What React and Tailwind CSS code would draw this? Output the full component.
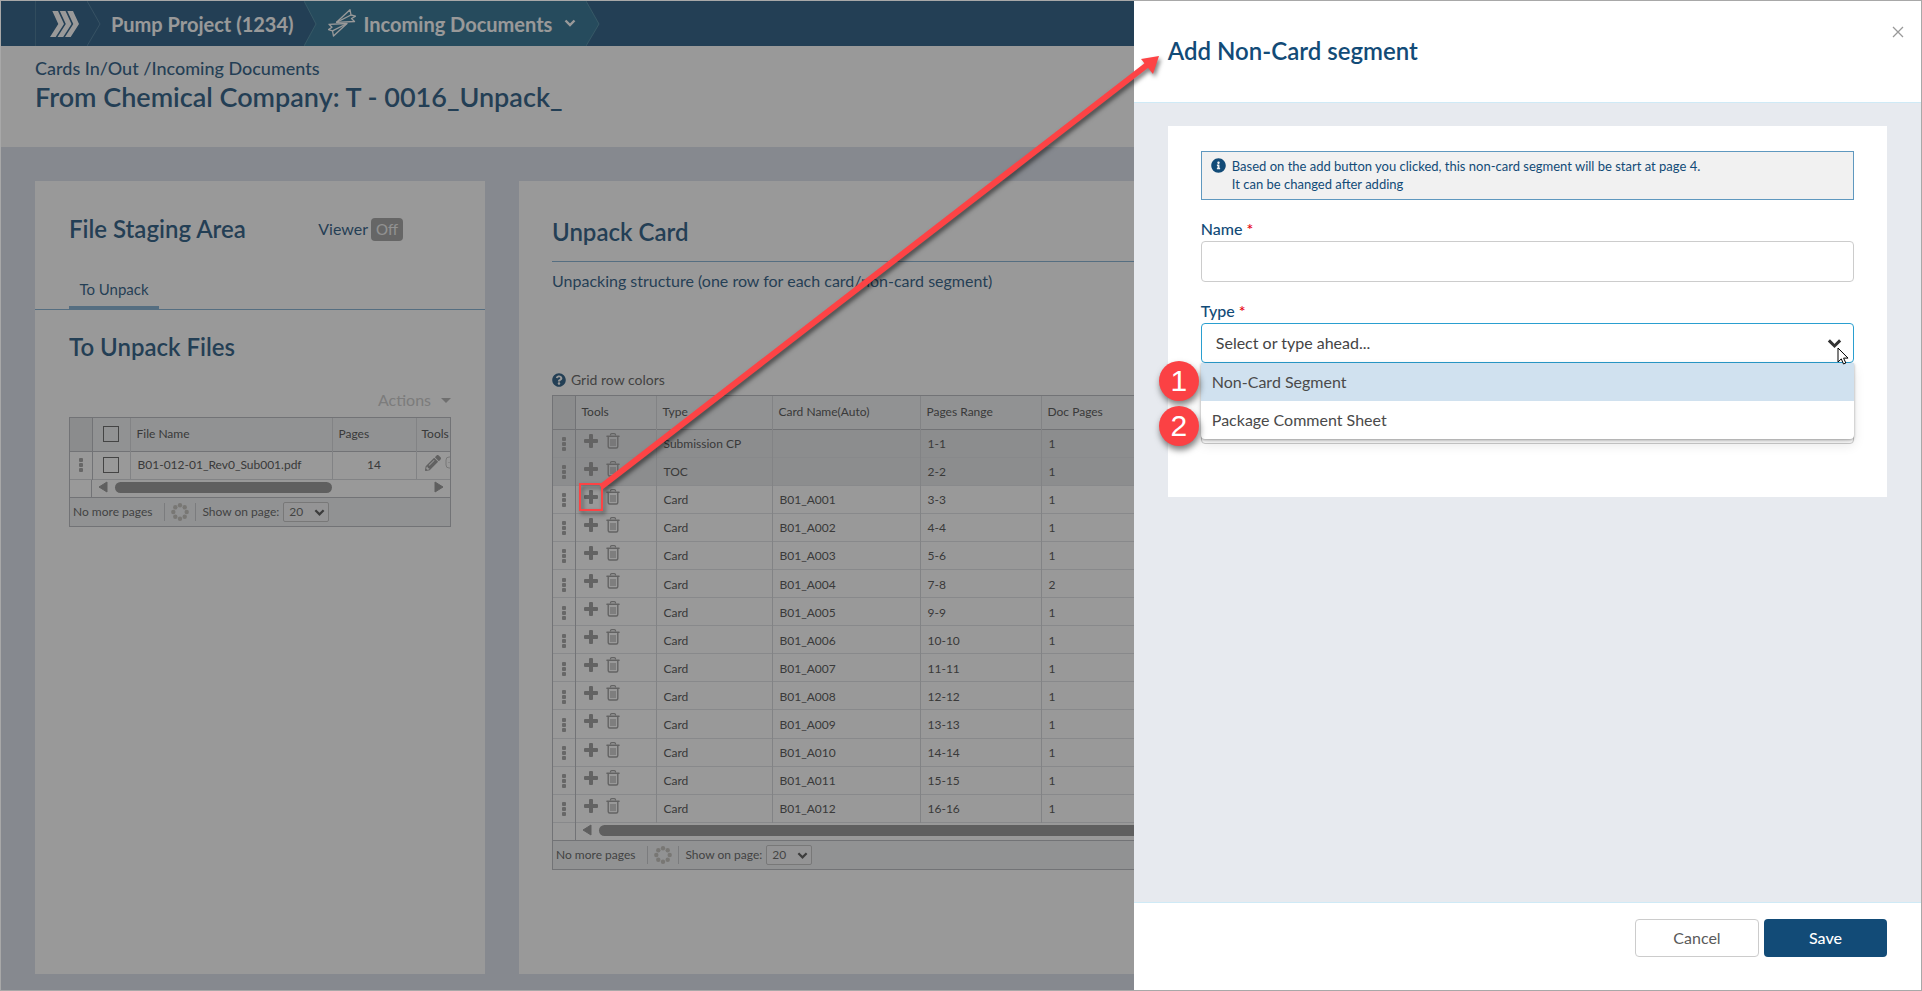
import React from "react";
import { FaPencilAlt, FaQuestionCircle, FaInfoCircle } from "react-icons/fa";

const gridRows = [
  { type: "Submission CP", name: "", range: "1-1", pages: 1, locked: true },
  { type: "TOC", name: "", range: "2-2", pages: 1, locked: true },
  { type: "Card", name: "B01_A001", range: "3-3", pages: 1 },
  { type: "Card", name: "B01_A002", range: "4-4", pages: 1 },
  { type: "Card", name: "B01_A003", range: "5-6", pages: 1 },
  { type: "Card", name: "B01_A004", range: "7-8", pages: 2 },
  { type: "Card", name: "B01_A005", range: "9-9", pages: 1 },
  { type: "Card", name: "B01_A006", range: "10-10", pages: 1 },
  { type: "Card", name: "B01_A007", range: "11-11", pages: 1 },
  { type: "Card", name: "B01_A008", range: "12-12", pages: 1 },
  { type: "Card", name: "B01_A009", range: "13-13", pages: 1 },
  { type: "Card", name: "B01_A010", range: "14-14", pages: 1 },
  { type: "Card", name: "B01_A011", range: "15-15", pages: 1 },
  { type: "Card", name: "B01_A012", range: "16-16", pages: 1 },
];

const Grip = () => (
  <svg className="mx-auto" width="4" height="14" viewBox="0 0 4 14" fill="#9a9a9a">
    <rect width="4" height="4" rx="1" />
    <rect y="5" width="4" height="4" rx="1" />
    <rect y="10" width="4" height="4" rx="1" />
  </svg>
);

const Plus = () => (
  <svg width="14" height="14" viewBox="0 0 14 14" fill="currentColor">
    <rect x="5" width="4" height="14" rx="1" />
    <rect y="5" width="14" height="4" rx="1" />
  </svg>
);

const Trash = () => (
  <svg width="14" height="16" viewBox="0 0 14 16" fill="none" stroke="currentColor">
    <path d="M4.500 2.500V1.800c0-.8.4-1.200 1.200-1.200h2.600c.8 0 1.200.4 1.200 1.200v.7" strokeWidth="1.200" />
    <path d="M1 3.200h12" strokeWidth="1.600" strokeLinecap="round" />
    <path d="M2.200 4v9.500c0 1 .6 1.500 1.500 1.500h6.600c.9 0 1.500-.5 1.500-1.500V4" strokeWidth="1.400" />
    <path d="M5 6v7M7 6v7M9 6v7" />
  </svg>
);

const Caret = ({ className, size = 12 }) => (
  <svg className={className} width={size} height={size} viewBox="0 0 12 12" fill="none" stroke="currentColor" strokeWidth="2.400">
    <path d="M1.500 3.500 6 8l4.500-4.500" />
  </svg>
);

const Spinner = () => (
  <svg width="18" height="18" viewBox="0 0 18 18" fill="#bdbab4">
    <circle cx="9" cy="2.300" r="2.200" />
    <circle cx="13.700" cy="4.300" r="2.200" />
    <circle cx="15.700" cy="9" r="2.200" />
    <circle cx="13.700" cy="13.700" r="2.200" />
    <circle cx="9" cy="15.700" r="2.200" />
    <circle cx="4.300" cy="13.700" r="2.200" />
    <circle cx="2.300" cy="9" r="2.200" />
    <circle cx="4.300" cy="4.300" r="2.200" />
  </svg>
);

const Arrow = ({ flip }) => (
  <svg className="shrink-0" width="10" height="12" viewBox="0 0 10 12" fill="#8b8b8b">
    {flip ? <path d="M1 1v10l8-5z" stroke="#8b8b8b" strokeLinejoin="round" /> : <path d="M9 1v10L1 6z" stroke="#8b8b8b" strokeLinejoin="round" />}
  </svg>
);

const Pager = ({ id }) => (
  <div className="flex h-[29px] items-center border-t border-[#b0b3b8] bg-[#eef0f3] pl-[3px] text-xs text-[#505050]">
    <span>No more pages</span>
    <div className="ml-3 flex h-[18px] items-center border-x border-[#c3c5c9] px-[6px]">
      <Spinner />
    </div>
    <label htmlFor={id} className="ml-[6px]">Show on page:</label>
    <div className="relative ml-1">
      <select id={id} className="h-5 w-[46px] appearance-none rounded-xs border border-[#bcbcbc] bg-[#f4f5f7] pl-[5px] text-xs text-[#555]">
        <option>20</option>
      </select>
      <Caret className="pointer-events-none absolute right-[4px] top-[5px] text-[#444]" size={11} />
    </div>
  </div>
);

const TopBar = () => (
  <nav className="flex h-[45px] items-stretch bg-[#124b77] text-xl font-bold text-white">
    <a href="#home" aria-label="Home" className="ml-[34px] flex items-center border-l border-[#2f6486] pl-[14px]">
      <svg width="29" height="26" viewBox="0 0 29 26" fill="#fff">
        <path d="M2.300 0H8l6 13-8.300 13H0l8.300-13z" />
        <path d="M9.800 0h5.700l6 13-8.300 13H7.500l8.300-13z" />
        <path d="M17.300 0H23l6 13-8.300 13H15l8.300-13z" />
      </svg>
    </a>
    <svg className="ml-[8px]" width="14" height="45" viewBox="0 0 14 45" fill="none" stroke="#3a6f93">
      <path d="M0 0l13 23L0 45" />
    </svg>
    <a href="#project" className="ml-[10px] flex items-center">Pump Project (1234)</a>
    <svg className="ml-[10px]" width="14" height="45" viewBox="0 0 14 45">
      <path d="M0 0h14v45H0l12-22z" fill="#196387" />
      <path d="M0 0l12 23L0 45" fill="none" stroke="#3a7d98" />
    </svg>
    <button type="button" className="flex items-center bg-[#196387] px-[10px]">
      <svg className="mb-[1px]" width="28" height="28" viewBox="-.5 0 28 28" fill="none" stroke="#fff" strokeWidth="1.300" strokeLinejoin="round">
        <path d="M8 13.300 21.500.7l1 5.300 4.500 1.200-4 2.300 3 3z" />
        <path d="M8 13.300 22.500 6" />
        <path d="M18.500 14.500 5 27.100l-1-5.300-4-1.200 3.500-2.300-3-3z" />
        <path d="M18.500 14.500 4 21.800" />
      </svg>
      <span className="ml-2">Incoming Documents</span>
      <Caret className="ml-3 mb-px" />
    </button>
    <svg width="14" height="45" viewBox="0 0 14 45">
      <path d="M0 0l13 23L0 45z" fill="#196387" />
      <path d="M0 0l13 23L0 45" fill="none" stroke="#3a7d98" />
    </svg>
  </nav>
);

const StagingArea = () => (
  <section className="flex w-[450px] shrink-0 flex-col bg-white">
    <div className="flex items-center px-[34px] pt-8">
      <h2 className="text-2xl font-semibold">File Staging Area</h2>
      <div className="ml-auto mr-12 flex items-center gap-[3px] text-base">
        <span>Viewer</span>
        <button type="button" className="h-[23px] rounded-sm bg-[#999] px-[5px] text-[15px] leading-5 text-[#f0f0f0]">Off</button>
      </div>
    </div>
    <div className="mt-[27px] border-b border-[#77a9cf] px-[34px]">
      <button type="button" className="block h-[37px] w-[90px] border-b-3 border-[#77a9cf] text-[15px]">To Unpack</button>
    </div>
    <div className="px-[34px] pt-[21px]">
      <h2 className="text-2xl font-semibold">To Unpack Files</h2>
      <button type="button" className="ml-auto mt-[25px] flex items-center gap-[10px] text-base text-[#c4c4c4]">
        Actions
        <svg width="10" height="5" viewBox="0 0 10 5" fill="#aaa"><path d="M0 0h10L5 5z" /></svg>
      </button>
      <div className="mt-[5px] overflow-hidden border border-[#b0b3b8] text-xs text-[#404040]">
        <table className="w-full table-fixed border-collapse text-left">
          <colgroup>
            <col className="w-[22px]" />
            <col className="w-[38px]" />
            <col className="w-[202px]" />
            <col className="w-[84px]" />
            <col />
          </colgroup>
          <thead>
            <tr className="h-[33px] border-b border-[#b0b3b8] bg-[#eef0f3]">
              <th className="border-r border-[#b0b3b8] bg-[#e3e4e7]" />
              <th className="border-r border-[#d0d2d6] text-center">
                <input type="checkbox" aria-label="Select all files" className="block mx-auto size-4 appearance-none border border-[#555]" />
              </th>
              <th className="border-r border-[#d0d2d6] pl-[6px] font-normal">File Name</th>
              <th className="border-r border-[#d0d2d6] pl-[6px] font-normal">Pages</th>
              <th className="pl-[5px] font-normal">Tools</th>
            </tr>
          </thead>
          <tbody>
            <tr className="h-7 border-b border-[#d0d2d6]">
              <td className="border-r border-[#b0b3b8]"><Grip /></td>
              <td className="border-r border-[#d0d2d6]">
                <input type="checkbox" aria-label="Select file" className="block mx-auto size-4 appearance-none border border-[#555]" />
              </td>
              <td className="border-r border-[#d0d2d6] pl-[7px]">B01-012-01_Rev0_Sub001.pdf</td>
              <td className="border-r border-[#d0d2d6] text-center">14</td>
              <td className="overflow-hidden">
                <div className="flex w-10 items-center gap-1 pb-1 pl-[8px] text-[#8f8f8f]">
                  <FaPencilAlt className="shrink-0" size={16} />
                  <svg className="shrink-0" width="14" height="14" viewBox="0 0 14 14" fill="none" stroke="#bbb">
                    <rect x="1" y="1" width="12" height="11" rx="3" />
                    <path d="M3.500 6.500h1M6.500 6.500h1" />
                  </svg>
                </div>
              </td>
            </tr>
          </tbody>
        </table>
        <div className="flex h-[17px]">
          <div className="w-[22px] border-r border-[#b0b3b8]" />
          <div className="flex flex-1 items-center px-[6px] pb-[2px]">
            <Arrow />
            <div className="ml-[7px] h-[11px] w-[217px] rounded-full bg-[#8b8b8b]" />
            <div className="ml-auto"><Arrow flip /></div>
          </div>
        </div>
        <Pager id="files-per-page" />
      </div>
    </div>
  </section>
);

const UnpackCard = () => (
  <section className="min-w-0 flex-1 bg-white px-[33px] pt-[35px]">
    <h2 className="border-b border-[#77a9cf] pb-[13px] text-2xl font-semibold">Unpack Card</h2>
    <p className="mt-[7px] text-base">Unpacking structure (one row for each card/non-card segment)</p>
    <div className="mt-[75px] flex items-center gap-[5px] text-sm leading-6 text-[#505050]">
      <FaQuestionCircle size={14} className="text-[#124b77]" />
      Grid row colors
    </div>
    <div className="mt-[3px] overflow-hidden border border-[#b0b3b8] text-xs text-[#404040]">
      <table className="h-[427px] w-full table-fixed border-collapse text-left">
        <colgroup>
          <col className="w-[22px]" />
          <col className="w-[81px]" />
          <col className="w-[116px]" />
          <col className="w-[148px]" />
          <col className="w-[121px]" />
          <col />
        </colgroup>
        <thead>
          <tr className="h-[33px] border-b border-[#b0b3b8] bg-[#eef0f3]">
            <th className="border-r border-[#b0b3b8] bg-[#e3e4e7]" />
            <th className="border-r border-[#d0d2d6] pl-[6px] font-normal">Tools</th>
            <th className="border-r border-[#d0d2d6] pl-[6px] font-normal">Type</th>
            <th className="border-r border-[#d0d2d6] pl-[6px] font-normal">Card Name(Auto)</th>
            <th className="border-r border-[#d0d2d6] pl-[6px] font-normal">Pages Range</th>
            <th className="pl-[6px] font-normal">Doc Pages</th>
          </tr>
        </thead>
        <tbody>
          {gridRows.map((row) => (
            <tr key={row.range} className={row.locked ? "h-7 border-b border-[#dcdee2] bg-[#e5e7e9]" : "h-7 border-b border-[#dcdee2]"}>
              <td className="border-r border-[#b0b3b8] pt-[2px]"><Grip /></td>
              <td className="border-r border-[#d0d2d6]">
                <div className="flex items-center gap-2 pb-[5px] pl-[8px] text-[#939393]">
                  <button type="button" aria-label="Add segment"><Plus /></button>
                  <button type="button" aria-label="Delete segment"><Trash /></button>
                </div>
              </td>
              <td className="border-r border-[#d0d2d6] pl-[7px] pt-[2px]">{row.type}</td>
              <td className="border-r border-[#d0d2d6] pl-[7px] pt-[2px]">{row.name}</td>
              <td className="border-r border-[#d0d2d6] pl-[7px] pt-[2px]">{row.range}</td>
              <td className="pl-[7px] pt-[2px]">{row.pages}</td>
            </tr>
          ))}
        </tbody>
      </table>
      <div className="flex h-[17px]">
        <div className="w-[23px] border-r border-[#b0b3b8]" />
        <div className="flex flex-1 items-center px-[6px] pb-[3px]">
          <Arrow />
          <div className="ml-[7px] h-[11px] flex-1 rounded-full bg-[#8b8b8b]" />
        </div>
      </div>
      <Pager id="cards-per-page" />
    </div>
  </section>
);

const Drawer = () => (
  <aside className="absolute inset-y-0 right-0 flex w-[41%] flex-col bg-white text-[#124b77]">
    <header className="relative border-b border-[#cfeaf6] px-[34px] pb-[35px] pt-[34px]">
      <h2 className="text-2xl font-semibold">Add Non-Card segment</h2>
      <button type="button" aria-label="Close" className="absolute right-[17px] top-[25px]">
        <svg width="12" height="12" viewBox="0 0 12 12" stroke="#999" strokeWidth="1.300"><path d="M1 1l10 10M11 1 1 11" /></svg>
      </button>
    </header>
    <div className="flex-1 bg-[#e7eaef] px-[34px] pt-[23px]">
      <form id="segment-form" className="bg-white px-[33px] pb-[53px] pt-[25px]">
        <div className="flex gap-[6px] border border-[#5f98bf] bg-[#f1f1f1] px-[9px] pb-[6px] pt-[5px] text-[13px] leading-[18px]">
          <FaInfoCircle size={15} className="mt-px shrink-0" />
          <p>
            Based on the add button you clicked, this non-card segment will be start at page 4.
            <br />
            It can be changed after adding
          </p>
        </div>
        <label htmlFor="name" className="mt-[17px] block text-base leading-6 font-medium">
          Name <span className="text-red-600">*</span>
        </label>
        <input id="name" type="text" className="block h-[41px] w-full rounded-sm border border-[#ccc] px-3" />
        <label htmlFor="type" className="mt-[17px] block text-base leading-6 font-medium">
          Type <span className="text-red-600">*</span>
        </label>
        <div className="relative">
          <select id="type" className="block h-10 w-full appearance-none rounded-sm border border-[#2a9fd0] bg-white pl-[14px] text-base text-[#444]">
            <option>Select or type ahead...</option>
          </select>
          <Caret className="pointer-events-none absolute right-[12px] top-[13px] text-[#333]" size={15} />
          <svg className="absolute right-[5px] top-[24px] z-20" width="12" height="18" viewBox="0 0 12 18">
            <path d="M1 1v14l3.300-3.100L6.500 17l2.300-1-2.200-4.900H11z" fill="#fff" stroke="#000" />
          </svg>
          <ul role="listbox" aria-label="Type" className="absolute inset-x-0 top-full z-10 overflow-hidden rounded-b-sm bg-white text-base text-[#4a4a4a] shadow-[0_1px_3px_rgba(0,0,0,0.35),0_6px_12px_rgba(0,0,0,0.1)]">
            <li role="option" aria-selected="true" className="bg-[#d0e1ef] px-[11px] py-[7px]">Non-Card Segment</li>
            <li role="option" aria-selected="false" className="px-[11px] py-[7px]">Package Comment Sheet</li>
          </ul>
          <span className="absolute -left-[42px] top-[38px] z-20 flex size-10 items-center justify-center rounded-full bg-[#fb4144] font-['Liberation_Sans',sans-serif] text-3xl text-white shadow-[1px_4px_6px_rgba(0,0,0,0.5)]">1</span>
          <span className="absolute -left-[42px] top-[83px] z-20 flex size-10 items-center justify-center rounded-full bg-[#fb4144] font-['Liberation_Sans',sans-serif] text-3xl text-white shadow-[1px_4px_6px_rgba(0,0,0,0.5)]">2</span>
        </div>
        <input type="text" aria-label="Comment" className="mt-[41px] block h-10 w-full rounded-sm border border-[#ccc] px-3" />
      </form>
    </div>
    <footer className="flex justify-end gap-[5px] border-t border-[#cfeaf6] px-[34px] pb-[33px] pt-4 text-base">
      <button type="button" className="h-[38px] w-[124px] rounded-sm border border-[#ccc] text-[#5a5a5a]">Cancel</button>
      <button type="submit" form="segment-form" className="h-[38px] w-[123px] rounded-sm bg-[#124b77] font-medium text-white">Save</button>
    </footer>
  </aside>
);

const Callout = () => (
  <svg className="pointer-events-none absolute left-0 top-0 z-30 drop-shadow-[2px_3px_2px_rgba(0,0,0,0.5)]" width="1200" height="540" viewBox="1 1 1200 540">
    <path d="M601 487 1147 65" stroke="#fd4345" strokeWidth="6" />
    <path d="M1159 56 1141 59l12 15z" fill="#fd4345" />
    <rect x="580" y="484" width="22" height="26" fill="none" stroke="#fd4345" strokeWidth="2" />
  </svg>
);

const App = () => {
  return (
    <div className="relative flex min-h-screen flex-col overflow-hidden border border-[#a8a8a8] bg-white font-[Lato,sans-serif] text-[#124b77]">
      <TopBar />
      <header className="px-[34px] pb-9 pt-[10px]">
        <p className="text-lg leading-6 font-medium">Cards In/Out /Incoming Documents</p>
        <h1 className="mt-[2px] text-[27px] leading-[29px] font-semibold">From Chemical Company: T - 0016_Unpack_</h1>
      </header>
      <main className="flex flex-1 gap-[34px] bg-[#d9dfeb] px-[34px] pb-4 pt-[34px]">
        <StagingArea />
        <UnpackCard />
      </main>
      <div className="absolute inset-0 bg-[#333]/50" />
      <Drawer />
      <Callout />
    </div>
  );
};

export default App;
